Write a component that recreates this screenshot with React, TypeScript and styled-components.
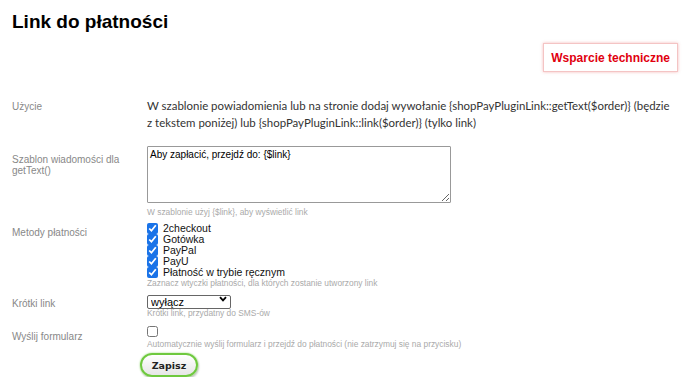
import styled, { createGlobalStyle } from 'styled-components'

const GlobalStyle = createGlobalStyle`
  html, body {
    margin: 0;
    padding: 0;
    background: #fff;
  }
  body {
    font-family: 'Liberation Sans', Arial, sans-serif;
    color: #000;
  }
`

const Page = styled.div`
  padding: 11px 12px 0 12px;
  width: 700px;
  box-sizing: border-box;
`

const Title = styled.h1`
  margin: 0;
  font-size: 19px;
  font-weight: bold;
  line-height: 22px;
`

const Toolbar = styled.div`
  display: flex;
  justify-content: flex-end;
  margin-top: 10px;
  padding-right: 10px;
`

const SupportButton = styled.button`
  height: 29px;
  padding: 0 7px;
  background: #fff;
  border: 1px solid #f4c4c4;
  box-shadow: 0 0 3px rgba(230, 60, 60, 0.35);
  color: #e1000f;
  font-family: 'Liberation Sans', Arial, sans-serif;
  font-size: 12px;
  font-weight: bold;
  cursor: pointer;
`

const Form = styled.div`
  margin-top: 28px;
  display: flex;
  flex-direction: column;
`

const Row = styled.div<{ $gap?: number }>`
  display: grid;
  grid-template-columns: 135px 1fr;
  margin-bottom: ${({ $gap }) => $gap ?? 0}px;
`

const Label = styled.div<{ $top?: number }>`
  color: #888;
  font-size: 10px;
  line-height: 11px;
  padding-top: ${({ $top }) => $top ?? 0}px;
`

const Value = styled.div`
  display: flex;
  flex-direction: column;
  align-items: flex-start;
`

const Description = styled.div`
  max-width: 523px;
  font-family: Lato, 'Open Sans', sans-serif;
  font-size: 11.45px;
  line-height: 17px;
  color: #333;
  margin-top: -3px;
`

const TextArea = styled.textarea`
  width: 304px;
  height: 57px;
  box-sizing: border-box;
  border: 1px solid #999;
  border-radius: 1px;
  padding: 2px 2px;
  font-family: 'Liberation Sans', Arial, sans-serif;
  font-size: 10px;
  line-height: 12px;
  color: #000;
  resize: vertical;
  margin: 0;
`

const Hint = styled.div<{ $top?: number }>`
  color: #aaa;
  font-size: 8.4px;
  line-height: 12px;
  margin-top: ${({ $top }) => $top ?? 0}px;
`

const CheckList = styled.div`
  display: flex;
  flex-direction: column;
`

const CheckRow = styled.label`
  display: flex;
  align-items: center;
  height: 11px;
  line-height: 11px;
  font-size: 10.5px;
  color: #111;
  gap: 5px;
`

const Check = styled.input.attrs({ type: 'checkbox' })`
  width: 11px;
  height: 11px;
  margin: 0;
  accent-color: #1a73e8;
`

const SelectWrap = styled.div`
  position: relative;
  width: 84px;
  height: 14px;
`

const Select = styled.select`
  appearance: none;
  width: 100%;
  height: 100%;
  box-sizing: border-box;
  font-family: 'Liberation Sans', Arial, sans-serif;
  font-size: 11px;
  line-height: 12px;
  padding: 0 14px 0 3px;
  border: 1px solid #666;
  border-radius: 2px;
  background: #fff;
  color: #000;
  margin: 0;
`

const Chevron = styled.svg`
  position: absolute;
  right: 4px;
  top: 4px;
  width: 8px;
  height: 6px;
  pointer-events: none;
`

const SaveButton = styled.button`
  margin-left: -7px;
  margin-top: 3px;
  width: 58px;
  height: 24px;
  border-radius: 12px;
  border: 2px solid #6fc93f;
  box-shadow: 0 0 2px #8dd86a, 1px 2px 2px rgba(0, 0, 0, 0.2);
  background: linear-gradient(#ffffff, #e6e6e6);
  font-family: 'DejaVu Sans', Verdana, sans-serif;
  font-weight: bold;
  font-size: 9.5px;
  color: #222;
  cursor: pointer;
`

const methods = ['2checkout', 'Gotówka', 'PayPal', 'PayU', 'Płatność w trybie ręcznym']

const App = () => {
  return (
    <>
      <GlobalStyle />
      <Page>
        <Title>Link do płatności</Title>
        <Toolbar>
          <SupportButton>Wsparcie techniczne</SupportButton>
        </Toolbar>
        <Form>
          <Row $gap={15}>
            <Label $top={1}>Użycie</Label>
            <Value>
              <Description>
                W szablonie powiadomienia lub na stronie dodaj wywołanie {'{shopPayPluginLink::getText($order)}'} (będzie z tekstem poniżej) lub {'{shopPayPluginLink::link($order)}'} (tylko link)
              </Description>
            </Value>
          </Row>
          <Row $gap={5}>
            <Label $top={8}>
              Szablon wiadomości dla
              <br />
              getText()
            </Label>
            <Value>
              <TextArea defaultValue={'Aby zapłacić, przejdź do: {$link}'} />
              <Hint $top={3}>W szablonie użyj {'{$link}'}, aby wyświetlić link</Hint>
            </Value>
          </Row>
          <Row $gap={3}>
            <Label $top={4}>Metody płatności</Label>
            <Value>
              <CheckList>
                {methods.map((m) => (
                  <CheckRow key={m}>
                    <Check defaultChecked />
                    {m}
                  </CheckRow>
                ))}
              </CheckList>
              <Hint $top={-1}>Zaznacz wtyczki płatności, dla których zostanie utworzony link</Hint>
            </Value>
          </Row>
          <Row $gap={7}>
            <Label $top={6}>Krótki link</Label>
            <Value>
              <SelectWrap>
                <Select defaultValue="off">
                  <option value="off">wyłącz</option>
                  <option value="on">włącz</option>
                </Select>
                <Chevron viewBox="0 0 8 6">
                  <path d="M1 1.2 L4 4.4 L7 1.2" fill="none" stroke="#000" strokeWidth="1.8" />
                </Chevron>
              </SelectWrap>
              <Hint $top={1}>Krótki link, przydatny do SMS-ów</Hint>
            </Value>
          </Row>
          <Row>
            <Label $top={5}>Wyślij formularz</Label>
            <Value>
              <Check />
              <Hint $top={1}>Automatycznie wyślij formularz i przejdź do płatności (nie zatrzymuj się na przycisku)</Hint>
              <SaveButton>Zapisz</SaveButton>
            </Value>
          </Row>
        </Form>
      </Page>
    </>
  )
}

export default App
